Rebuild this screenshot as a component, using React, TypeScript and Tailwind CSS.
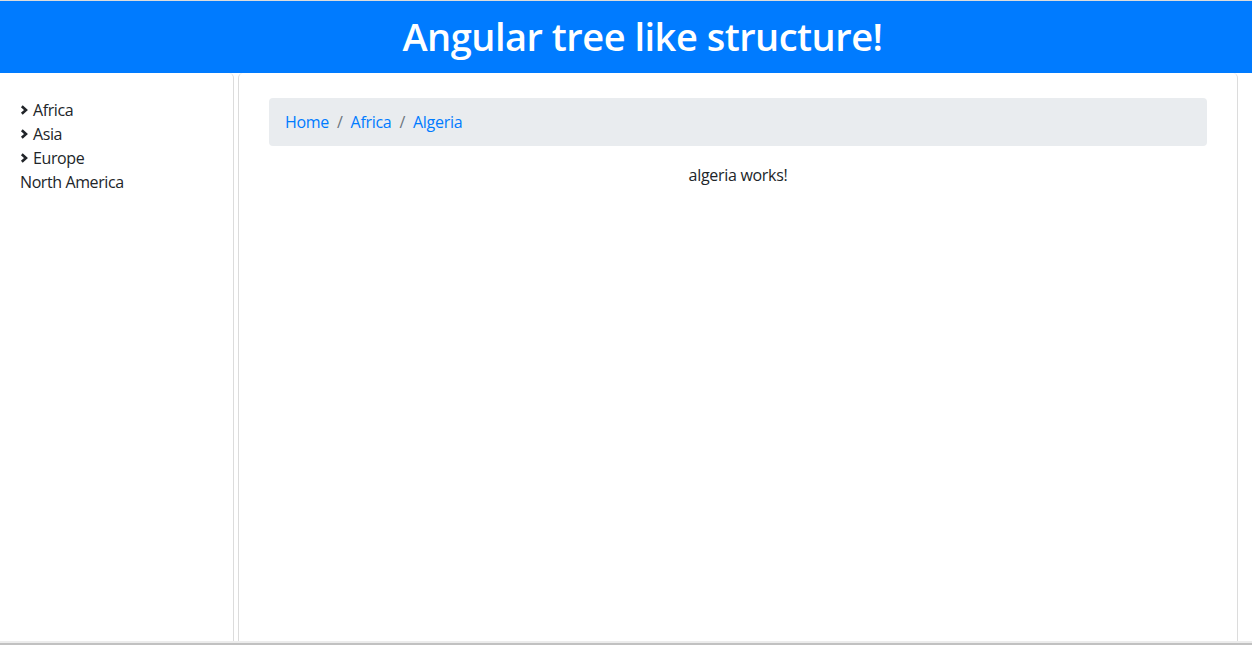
import React from "react";

const regions = ["Africa", "Asia", "Europe"];

const Chevron = () => (
  <svg viewBox="0 0 8 10" className="w-[8px] h-[10px] mr-[5px]">
    <polyline points="1.8,1.2 6,5 1.8,8.8" fill="none" stroke="#212529" strokeWidth="2.6" />
  </svg>
);

const App = () => {
  return (
    <div
      className="h-[645px] w-full flex flex-col bg-white text-[#212529] overflow-hidden"
      style={{ fontFamily: '"Open Sans", "Noto Sans", sans-serif' }}
    >
      <div className="h-px bg-[#dcdcdc]"></div>
      <header className="h-[72px] bg-[#007bff] flex items-center justify-center pl-[33px]">
        <h1 className="text-white text-[38px] tracking-[-0.5px] font-semibold leading-none pb-[2px]">
          Angular tree like structure!
        </h1>
      </header>
      <div className="flex-1 flex gap-[4px] pr-[14px]">
        <aside className="w-[234px] border-r border-[#dcdcdc] rounded-tr-[5px] pt-[25px] pl-[20px]">
          <ul className="text-[16px] leading-[24px] tracking-[-0.4px]">
            {regions.map((r) => (
              <li key={r} className="flex items-center">
                <Chevron />
                {r}
              </li>
            ))}
            <li>North America</li>
          </ul>
        </aside>
        <main className="flex-1 border-x border-[#dcdcdc] rounded-t-[5px] pt-[25px] px-[30px]">
          <nav className="h-[48px] bg-[#e9ecef] rounded-[4px] flex items-center px-[16px] text-[16px] tracking-[-0.3px]">
            <span className="text-[#007bff]">Home</span>
            <span className="text-[#6c757d] px-[8px]">/</span>
            <span className="text-[#007bff]">Africa</span>
            <span className="text-[#6c757d] px-[8px]">/</span>
            <span className="text-[#007bff]">Algeria</span>
          </nav>
          <p className="text-center text-[16px] leading-[24px] tracking-[-0.3px] mt-[17px]">algeria works!</p>
        </main>
      </div>
      <div className="h-[2px] bg-[#ececec]"></div>
      <div className="h-[2px] bg-[#c1c1c1]"></div>
    </div>
  );
};

export default App;
